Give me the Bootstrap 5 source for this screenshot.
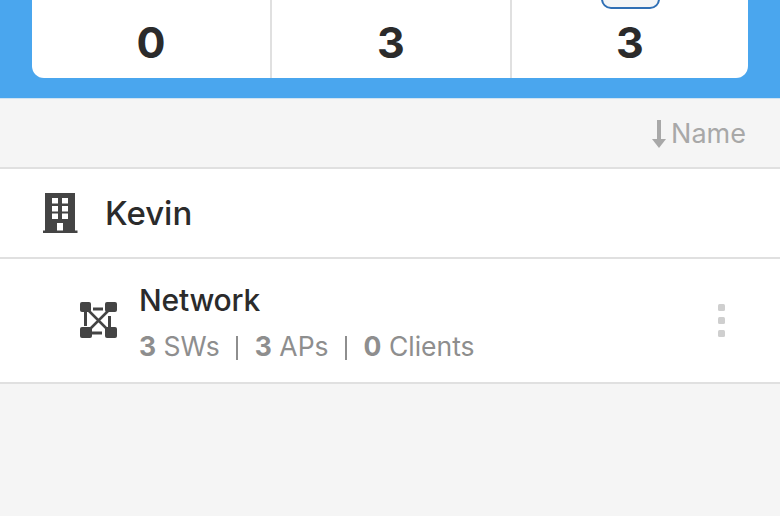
<!DOCTYPE html>
<html lang="en">
<head>
    <meta charset="UTF-8">
    <title>Network</title>
    <link href="https://cdn.jsdelivr.net/npm/bootstrap@5.3.3/dist/css/bootstrap.min.css" rel="stylesheet">
    <style>
        html, body { height: 100%; overflow: hidden; }
        body { background-color: #f5f5f5; font-family: Inter, "Liberation Sans", sans-serif; color: #2b2b2b; }
        .top-band { background: #4aa6ee; height: 99px; padding: 0 32px 20px; border-bottom: 1px solid #cfe3f2; }
        .stat-card { background: #fff; height: 78px; border-radius: 0 0 12px 12px; overflow: hidden; }
        .stat-cell { width: 238px; flex: none; font-size: 43px; font-weight: 700; line-height: 1; padding-bottom: 14px; }
        .stat-cell + .stat-cell { border-left: 2px solid #e0e0e0; }
        .stat-cell.mid { width: 240px; }
        .stat-pill { position: absolute; top: -12px; left: 89px; width: 59px; height: 21px; background: #f3f5f7; border: 2px solid #2f6fb5; border-radius: 10px; }
        .sort-row { height: 70px; padding-right: 34px; border-bottom: 2px solid #e0e0e0; color: #a8a8a8; font-size: 27px; }
        .sort-row svg { margin-top: 2px; margin-right: 5px; }
        .sort-label { margin-top: 3px; }
        .site-row { height: 90px; background: #fff; border-bottom: 2px solid #e0e0e0; padding-left: 43px; }
        .site-name { font-size: 33px; font-weight: 500; margin-left: 27px; margin-top: 2px; }
        .net-row { height: 125px; background: #fff; border-bottom: 2px solid #e0e0e0; padding-left: 80px; padding-right: 55px; }
        .net-name { font-size: 30px; font-weight: 500; line-height: 34px; margin-bottom: 14px; letter-spacing: -.2px; }
        .net-meta { font-size: 26.5px; line-height: 30px; color: #8e8e8e; white-space: pre; }
        .net-meta b { font-weight: 700; }
        .pipe-sep { display: inline-block; width: 2px; height: 24px; background: #8e8e8e; margin: 0 16.500px; vertical-align: -4px; }
        .net-text { margin-left: 21px; margin-top: 2px; }
        .dots { gap: 6px; }
        .dots span { width: 7px; height: 7px; background: #cfcfcf; border-radius: 1.5px; }
    </style>
</head>
<body>
<div class="top-band">
    <div class="stat-card d-flex">
        <div class="stat-cell d-flex align-items-end justify-content-center">0</div>
        <div class="stat-cell mid d-flex align-items-end justify-content-center">3</div>
        <div class="stat-cell d-flex align-items-end justify-content-center position-relative">
            <span class="stat-pill"></span>3
        </div>
    </div>
</div>
<div class="sort-row d-flex align-items-center justify-content-end">
    <svg width="14" height="28" viewBox="0 0 14 28" fill="#a8a8a8">
        <rect x="5" y="0" width="4" height="22"/>
        <path d="M0 19h14l-7 9z"/>
    </svg>
    <span class="sort-label">Name</span>
</div>
<div class="site-row d-flex align-items-center">
    <svg width="35" height="40" viewBox="0 0 35 40">
        <path fill="#444" fill-rule="evenodd" d="M2 0h30v37.500h2.500v2.500h-34.500v-2.500h2zM9 5v5.500h6v-5.500zM19 5v5.500h6v-5.500zM9 13v5.500h6v-5.500zM19 13v5.500h6v-5.500zM9 20.500v5.500h6v-5.500zM19 20.500v5.500h6v-5.500zM14 30v7.500h6v-7.500z"/>
    </svg>
    <span class="site-name">Kevin</span>
</div>
<div class="net-row d-flex align-items-center">
    <svg width="38" height="37" viewBox="0 0 38 37">
        <g fill="#444">
            <rect x="0" y="0" width="11" height="10" rx="2"/>
            <rect x="25" y="0" width="12" height="10" rx="2"/>
            <rect x="0" y="25" width="12" height="11" rx="2"/>
            <rect x="25" y="25" width="12" height="11" rx="2"/>
        </g>
        <g stroke="#444" fill="none">
            <path stroke-width="2.500" d="M7 7 30 30M30 7 7 30"/>
            <path stroke-width="3" d="M13 7h10M12 31h10M5.500 10v14M29.500 14v11"/>
        </g>
    </svg>
    <div class="net-text flex-grow-1">
        <div class="net-name">Network</div>
        <div class="net-meta"><b>3</b> SWs<span class="pipe-sep"></span><b>3</b> APs<span class="pipe-sep"></span><b>0</b> Clients</div>
    </div>
    <div class="dots d-flex flex-column">
        <span></span><span></span><span></span>
    </div>
</div>
<script src="https://cdn.jsdelivr.net/npm/bootstrap@5.3.3/dist/js/bootstrap.bundle.min.js"></script>
</body>
</html>
